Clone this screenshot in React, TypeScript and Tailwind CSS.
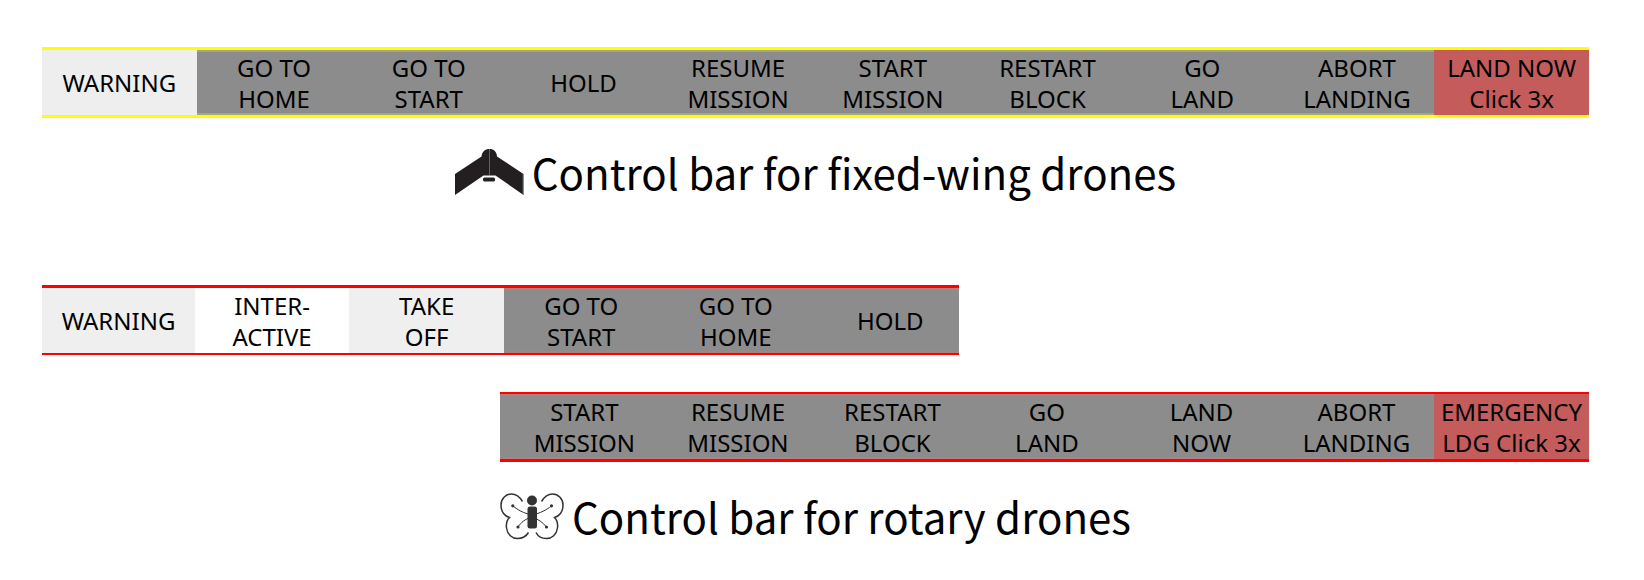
import type { ReactNode } from "react";

type Tone = "pale" | "white" | "gray" | "red";

type Command = { lines: string[]; tone: Tone; pad?: string };

const toneClass: Record<"yellow" | "red", Record<Tone, string>> = {
  yellow: {
    pale: "bg-[#eeeeee]",
    white: "bg-white",
    gray: "bg-[#8c8c8c] shadow-[inset_0_2px_0_#a8a77c,inset_0_-2px_0_#a8a77c]",
    red: "bg-[#c45c5c]",
  },
  red: {
    pale: "bg-[#efefef]",
    white: "bg-white",
    gray: "bg-[#8c8c8c] shadow-[inset_0_2px_0_#b87c7c,inset_0_-2px_0_#b87c7c]",
    red: "bg-[#c45c5c]",
  },
};

const fixedWing: Command[] = [
  { lines: ["WARNING"], tone: "pale" },
  { lines: ["GO TO", "HOME"], tone: "gray" },
  { lines: ["GO TO", "START"], tone: "gray" },
  { lines: ["HOLD"], tone: "gray" },
  { lines: ["RESUME", "MISSION"], tone: "gray" },
  { lines: ["START", "MISSION"], tone: "gray" },
  { lines: ["RESTART", "BLOCK"], tone: "gray" },
  { lines: ["GO", "LAND"], tone: "gray" },
  { lines: ["ABORT", "LANDING"], tone: "gray" },
  { lines: ["LAND NOW", "Click 3x"], tone: "red" },
];

const rotaryUpper: Command[] = [
  { lines: ["WARNING"], tone: "pale" },
  { lines: ["INTER-", "ACTIVE"], tone: "white" },
  { lines: ["TAKE", "OFF"], tone: "pale" },
  { lines: ["GO TO", "START"], tone: "gray" },
  { lines: ["GO TO", "HOME"], tone: "gray" },
  { lines: ["HOLD"], tone: "gray", pad: "pl-2" },
];

const rotaryLower: Command[] = [
  { lines: ["START", "MISSION"], tone: "gray", pad: "pl-2" },
  { lines: ["RESUME", "MISSION"], tone: "gray" },
  { lines: ["RESTART", "BLOCK"], tone: "gray" },
  { lines: ["GO", "LAND"], tone: "gray" },
  { lines: ["LAND", "NOW"], tone: "gray" },
  { lines: ["ABORT", "LANDING"], tone: "gray" },
  { lines: ["EMERGENCY", "LDG Click 3x"], tone: "red" },
];

function ControlBar({
  commands,
  accent,
  className,
}: {
  commands: Command[];
  accent: "yellow" | "red";
  className: string;
}) {
  return (
    <div role="toolbar" className={`grid ${className}`}>
      {commands.map(({ lines, tone, pad }) => (
        <button
          key={lines.join(" ")}
          type="button"
          className={`flex h-[65px] flex-col items-center justify-center font-['Noto_Sans',sans-serif] text-2xl leading-[31px] whitespace-nowrap text-black ${toneClass[accent][tone]} ${pad ?? ""}`}
        >
          {lines.map((line) => (
            <span key={line}>{line}</span>
          ))}
        </button>
      ))}
    </div>
  );
}

function FixedWingIcon() {
  return (
    <svg width="69" height="47" viewBox="0 0 69 47" aria-hidden="true">
      <path
        d="M0 25 L26.5 7.5 C27 2.5 30 0 34.5 0 S41.5 2.5 42 7.5 L68.5 25 V46 L40.5 26.5 H28.5 L0 46 Z"
        fill="#231f20"
      />
      <path d="M34.5 0 V26" stroke="#77706f" strokeWidth="0.8" />
      <path d="M68.2 25 V46" stroke="#8a8a8a" strokeWidth="0.8" />
      <rect x="28" y="28.5" width="12" height="4" rx="1.5" fill="#231f20" />
    </svg>
  );
}

function RotaryIcon() {
  return (
    <svg
      width="64"
      height="47"
      viewBox="0 0 64 47"
      fill="none"
      stroke="#333333"
      aria-hidden="true"
    >
      <g strokeWidth="1.5">
        <path d="M22.5 8.5 C19.5 3.5 15.5 1 11.5 1 C5.5 1 1 6 1 12 C1 19 5 23.5 9.500 24.500 C6.500 27.500 6 31 6.500 35 C7.500 41.500 12 45.500 17.500 45.500 C22 45.500 26 43.500 28.500 39.500" />
        <path d="M41.5 8.5 C44.5 3.5 48.5 1 52.5 1 C58.5 1 63 6 63 12 C63 19 59 23.5 54.500 24.500 C57.500 27.500 58 31 57.500 35 C56.500 41.500 52 45.500 46.500 45.500 C42 45.500 38 43.500 36 39.500" />
      </g>
      <g strokeWidth="1">
        <path d="M13 13 C18 17 23 20 32 22 C41 20 46 17 51.5 13" />
        <path d="M18 34 C21 29.5 25 26 32 24 C38 26 43 29.5 46.5 34" />
      </g>
      <g fill="#333333" stroke="none">
        <circle cx="12.8" cy="12.8" r="1.6" />
        <circle cx="51.5" cy="12.8" r="1.6" />
        <circle cx="18" cy="34" r="1.6" />
        <circle cx="46.5" cy="34" r="1.6" />
        <circle cx="32" cy="7.5" r="5" />
        <rect x="27.5" y="13.5" width="9.5" height="22" rx="2.5" />
      </g>
    </svg>
  );
}

function Caption({ icon, children }: { icon: ReactNode; children: ReactNode }) {
  return (
    <figcaption className="flex items-center justify-center gap-2 font-['Noto_Sans_CJK_SC',sans-serif] text-[42px] leading-[60px] whitespace-nowrap text-black">
      {icon}
      <span>{children}</span>
    </figcaption>
  );
}

export default function App() {
  return (
    <main className="flex min-h-screen flex-col gap-[83px] bg-white pt-[47px] pr-[55px] pl-[42px]">
      <figure className="flex flex-col gap-6">
        <ControlBar
          commands={fixedWing}
          accent="yellow"
          className="grid-cols-10 border-y-3 border-[#ffff00]"
        />
        <Caption icon={<FixedWingIcon />}>Control bar for fixed-wing drones</Caption>
      </figure>
      <figure className="flex flex-col">
        <ControlBar
          commands={rotaryUpper}
          accent="red"
          className="w-[59.3%] grid-cols-[153fr_154fr_155fr_154fr_155fr_146fr] border-t-3 border-b-2 border-[#ff0000]"
        />
        <ControlBar
          commands={rotaryLower}
          accent="red"
          className="mt-[37px] mb-6 ml-auto w-[70.4%] grid-cols-[161fr_154fr_155fr_154fr_155fr_155fr_155fr] border-t-2 border-b-3 border-[#ff0000]"
        />
        <Caption icon={<RotaryIcon />}>Control bar for rotary drones</Caption>
      </figure>
    </main>
  );
}
